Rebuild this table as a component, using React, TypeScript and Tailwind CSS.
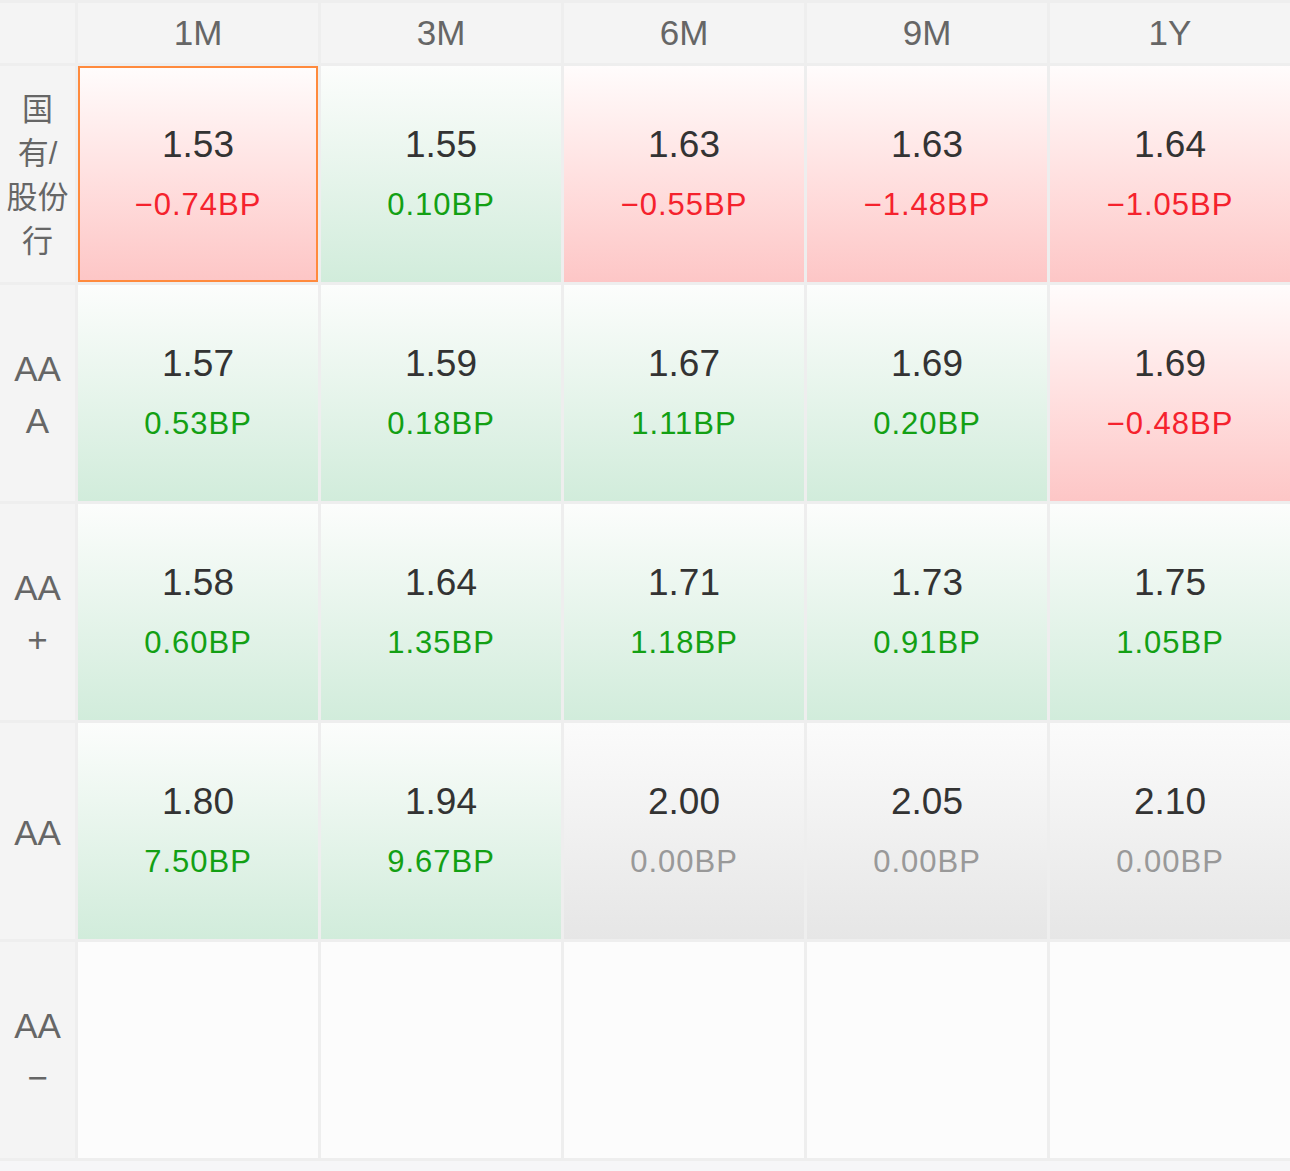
import React from "react";

type Tone = "red" | "green" | "gray" | "empty";

interface Cell {
  rate?: string;
  bp?: string;
  tone: Tone;
  selected?: boolean;
}

interface Row {
  label: string[];
  cjk?: boolean;
  cells: Cell[];
}

const terms = ["1M", "3M", "6M", "9M", "1Y"];

const rows: Row[] = [
  {
    label: ["国", "有/", "股份", "行"],
    cjk: true,
    cells: [
      { rate: "1.53", bp: "−0.74BP", tone: "red", selected: true },
      { rate: "1.55", bp: "0.10BP", tone: "green" },
      { rate: "1.63", bp: "−0.55BP", tone: "red" },
      { rate: "1.63", bp: "−1.48BP", tone: "red" },
      { rate: "1.64", bp: "−1.05BP", tone: "red" },
    ],
  },
  {
    label: ["AA", "A"],
    cells: [
      { rate: "1.57", bp: "0.53BP", tone: "green" },
      { rate: "1.59", bp: "0.18BP", tone: "green" },
      { rate: "1.67", bp: "1.11BP", tone: "green" },
      { rate: "1.69", bp: "0.20BP", tone: "green" },
      { rate: "1.69", bp: "−0.48BP", tone: "red" },
    ],
  },
  {
    label: ["AA", "+"],
    cells: [
      { rate: "1.58", bp: "0.60BP", tone: "green" },
      { rate: "1.64", bp: "1.35BP", tone: "green" },
      { rate: "1.71", bp: "1.18BP", tone: "green" },
      { rate: "1.73", bp: "0.91BP", tone: "green" },
      { rate: "1.75", bp: "1.05BP", tone: "green" },
    ],
  },
  {
    label: ["AA"],
    cells: [
      { rate: "1.80", bp: "7.50BP", tone: "green" },
      { rate: "1.94", bp: "9.67BP", tone: "green" },
      { rate: "2.00", bp: "0.00BP", tone: "gray" },
      { rate: "2.05", bp: "0.00BP", tone: "gray" },
      { rate: "2.10", bp: "0.00BP", tone: "gray" },
    ],
  },
  {
    label: ["AA", "−"],
    cells: [
      { tone: "empty" },
      { tone: "empty" },
      { tone: "empty" },
      { tone: "empty" },
      { tone: "empty" },
    ],
  },
];

const bgByTone: Record<Tone, string> = {
  red: "bg-gradient-to-b from-[#fffcfc] to-[#fdc6c6]",
  green: "bg-gradient-to-b from-[#fcfdfc] to-[#d1ecdb]",
  gray: "bg-gradient-to-b from-[#fbfbfb] to-[#e6e6e6]",
  empty: "bg-[#fcfcfc]",
};

const bpColor: Record<Tone, string> = {
  red: "text-[#f5222d]",
  green: "text-[#13a014]",
  gray: "text-[#999999]",
  empty: "text-[#999999]",
};

const RateCell: React.FC<{ cell: Cell }> = ({ cell }) => (
  <div
    className={`flex h-[216px] flex-col items-center justify-center ${bgByTone[cell.tone]} ${
      cell.selected ? "border-2 border-[#ff8a3d]" : ""
    }`}
  >
    {cell.rate && (
      <>
        <div className="text-[37px] leading-[44px] font-medium text-[#333333]">
          {cell.rate}
        </div>
        <div
          className={`mt-[18px] text-[31px] leading-[40px] tracking-[1px] ${bpColor[cell.tone]}`}
        >
          {cell.bp}
        </div>
      </>
    )}
  </div>
);

export default function App() {
  return (
    <div
      className="h-[1171px] w-[1290px] bg-[#f6f6f8]"
      style={{ fontFamily: '"Liberation Sans", Arial, "Noto Sans CJK SC", sans-serif' }}
    >
      <div className="grid grid-cols-[75px_repeat(5,240px)] gap-[3px] bg-[#eeeeee] pt-[3px]">
        <div className="h-[60px] bg-[#f4f4f4]" />
        {terms.map((t) => (
          <div
            key={t}
            className="flex h-[60px] items-center justify-center bg-[#f4f4f4] text-[35px] text-[#666666]"
          >
            {t}
          </div>
        ))}

        {rows.map((row, i) => (
          <React.Fragment key={i}>
            <div className="flex h-[216px] flex-col items-center justify-center bg-[#f4f4f4] pt-[3px] text-[#666666]">
              {row.label.map((l, j) => (
                <div
                  key={j}
                  className={
                    row.cjk
                      ? "text-[31px] leading-[44px]"
                      : "text-[35px] leading-[52px]"
                  }
                >
                  {l}
                </div>
              ))}
            </div>
            {row.cells.map((c, k) => (
              <RateCell key={k} cell={c} />
            ))}
          </React.Fragment>
        ))}
        <div className="col-span-6 h-0" />
      </div>
    </div>
  );
}
